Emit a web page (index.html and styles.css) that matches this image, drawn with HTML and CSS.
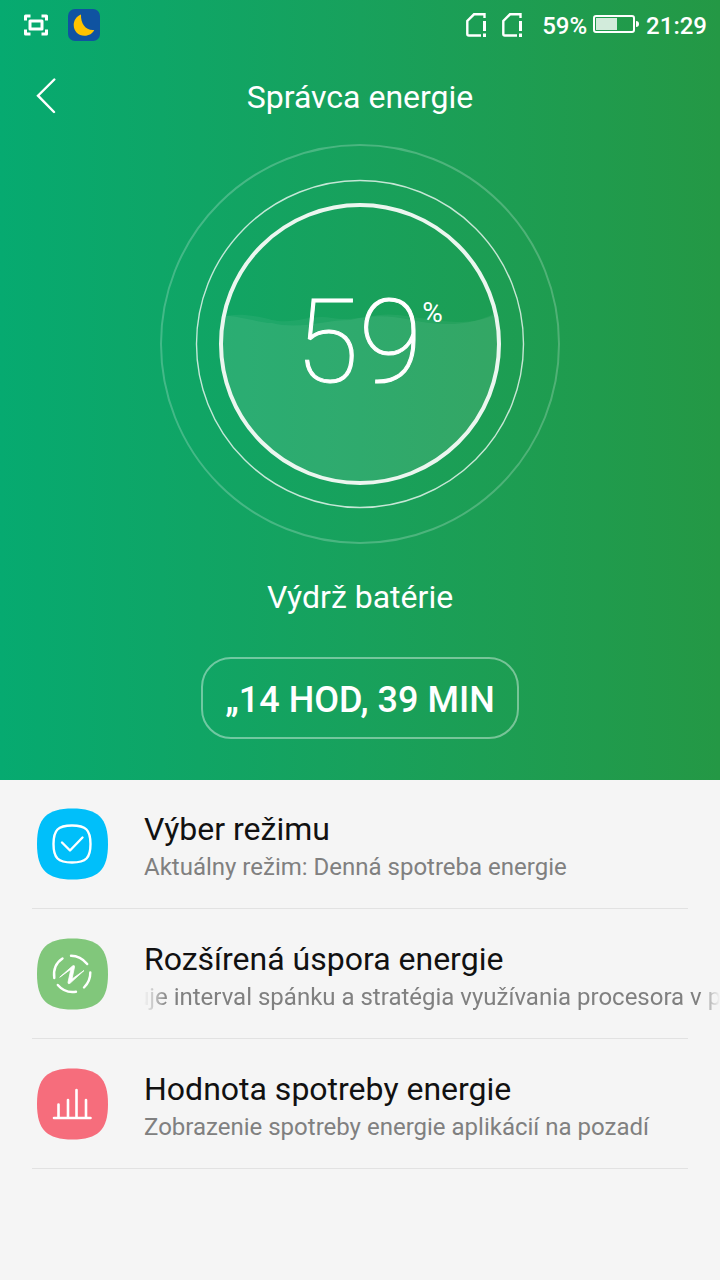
FILE: index.html
```html
<!DOCTYPE html>
<html lang="sk">
<head>
<meta charset="utf-8">
<meta name="viewport" content="width=device-width, initial-scale=1">
<title>Správca energie</title>
<link rel="stylesheet" href="styles.css">
</head>
<body>
<section class="hero">
  <div class="status">
    <div class="status-group status-left">
      <svg width="26" height="22" viewBox="0 0 26 22" fill="none" stroke="#fff" stroke-width="3" stroke-linejoin="round" aria-hidden="true">
        <path d="M2.500 6.500V2H7.500M18.500 2h5v4.500M2.500 15.500V20H7.500M18.500 20h5v-4.500"/>
        <rect x="7" y="7" width="12" height="8"/>
      </svg>
      <svg width="32" height="32" viewBox="0 0 32 32" aria-hidden="true">
        <rect width="32" height="32" rx="7" fill="#0f53a1"/>
        <path d="M13 5.500C8.500 7 5.700 11.500 5.700 16c0 6 4.500 10.800 10.800 10.800 4.500 0 8.300-2.500 9.700-5.800C18 22 12.500 14.500 13 5.500z" fill="#ffc400"/>
      </svg>
    </div>
    <div class="status-group status-right">
      <svg class="sim" width="20" height="24" viewBox="0 0 20 24" fill="none" stroke="#fff" aria-hidden="true">
        <path d="M18.500 5V1.300H8L1.300 8v13q0 1.500 1.500 1.500H15" stroke-width="2.400"/>
        <path d="M18.500 8v10M18.500 20.500V24" stroke-width="3"/>
      </svg>
      <svg class="sim" width="20" height="24" viewBox="0 0 20 24" fill="none" stroke="#fff" aria-hidden="true">
        <path d="M18.500 5V1.300H8L1.300 8v13q0 1.500 1.500 1.500H15" stroke-width="2.400"/>
        <path d="M18.500 8v10M18.500 20.500V24" stroke-width="3"/>
      </svg>
      <span class="level">59%</span>
      <svg class="battery" width="46" height="18" viewBox="0 0 46 18" aria-hidden="true">
        <rect x="1" y="1" width="40" height="16" rx="2" fill="none" stroke="#fff" stroke-width="2"/>
        <rect x="3" y="3" width="21" height="12" fill="#fff" fill-opacity=".8"/>
        <path d="M43 6q3 0 3 3t-3 3z" fill="#fff"/>
      </svg>
      <span>21:29</span>
    </div>
  </div>

  <header class="bar">
    <button class="back" type="button" aria-label="Späť">
      <svg width="20" height="36" viewBox="0 0 20 36" fill="none" stroke="#fff" stroke-width="2.400" stroke-linecap="round" aria-hidden="true"><path d="M18.300 1.500 2 17.700 18 34"/></svg>
    </button>
    <h1 class="title">Správca energie</h1>
  </header>

  <div class="gauge">
    <svg class="gauge-art" viewBox="0 0 400 400" fill="none" aria-hidden="true">
      <clipPath id="tank"><circle cx="200" cy="200" r="139"/></clipPath>
      <g clip-path="url(#tank)" fill="#fff">
        <path fill-opacity=".05" d="M60 174C72 168 95 171 112 176C135 181 150 170 172 174C200 178 212 168 238 171C275 175 310 186 340 168V345H60z"/>
        <path fill-opacity=".06" d="M60 171C85 173 100 179 112 179C140 186 165 176 190 176C215 170 230 172 252 176C285 184 320 180 340 166V345H60z"/>
      </g>
      <circle cx="200" cy="200" r="199" stroke="#fff" stroke-opacity=".22" stroke-width="2"/>
      <circle cx="200" cy="200" r="163.500" stroke="#fff" stroke-opacity=".75" stroke-width="1.400"/>
      <circle cx="200" cy="200" r="139" stroke="#ebf6ef" stroke-width="4"/>
    </svg>
    <div class="reading"><span class="number">59</span><span class="percent">%</span></div>
  </div>

  <p class="caption">Výdrž batérie</p>
  <p class="remaining">„14 HOD, 39 MIN</p>
</section>

<nav class="list">
  <a class="row" href="#mode">
    <svg class="icon" viewBox="0 0 72 72" fill="none" stroke="#fff" stroke-width="2.400" stroke-linecap="round" stroke-linejoin="round" aria-hidden="true">
      <path class="blue" d="M36.500.500C62 .500 72 10 72 36S62 71.500 36.500 71.500 1 62 1 36 11 .500 36.500.500z"/>
      <path d="M36 17.500C50 17.500 54.500 22 54.500 36S50 54.500 36 54.500 17.500 50 17.500 36 22 17.500 36 17.500zM26 34.500l8 8L46.500 29.500"/>
    </svg>
    <span class="text">
      <span class="name">Výber režimu</span>
      <span class="note">Aktuálny režim: Denná spotreba energie</span>
    </span>
  </a>
  <a class="row" href="#saving">
    <svg class="icon" viewBox="0 0 72 72" fill="none" stroke="#fff" stroke-width="2.400" stroke-linecap="round" stroke-linejoin="round" aria-hidden="true">
      <path class="green" d="M36.500.500C62 .500 72 10 72 36S62 71.500 36.500 71.500 1 62 1 36 11 .500 36.500.500z"/>
      <path d="M35 17.700Q44.500 17.700 51.200 26M54.300 34.500Q54.500 43 48 49.500M40 53.700Q29 55.500 21.800 47M18.300 40Q16.500 27 26.500 20.500"/>
      <path fill="#fff" stroke-width=".8" d="M24 39 36.500 28Q38.800 26.800 38.500 29L36 41 48 32.500 34 45.300Q31.800 46.500 32 44.300L34.800 31.500z"/>
    </svg>
    <span class="text">
      <span class="name">Rozšírená úspora energie</span>
      <span class="note ticker">uje interval spánku a stratégia využívania procesora v p</span>
    </span>
  </a>
  <a class="row" href="#usage">
    <svg class="icon" viewBox="0 0 72 72" fill="none" stroke="#fff" stroke-width="2.600" stroke-linecap="round" aria-hidden="true">
      <path class="red" d="M36.500.500C62 .500 72 10 72 36S62 71.500 36.500 71.500 1 62 1 36 11 .500 36.500.500z"/>
      <path d="M18 50h36.500M22.500 49V36.500M32 49V32M40.500 49V22M50 49V32"/>
    </svg>
    <span class="text">
      <span class="name">Hodnota spotreby energie</span>
      <span class="note">Zobrazenie spotreby energie aplikácií na pozadí</span>
    </span>
  </a>
</nav>
</body>
</html>
```
FILE: styles.css
```css
* { box-sizing: border-box; }

body {
  margin: 0;
  min-height: 100vh;
  background: #f5f5f5;
  font-family: Roboto, "Noto Sans", sans-serif;
  color: #fff;
}

h1, p { margin: 0; font-weight: 400; }

.hero {
  display: flex;
  flex-direction: column;
  align-items: center;
  padding-bottom: 41px;
  background: linear-gradient(90deg, #06aa70 0%, #18a15c 50%, #249845 100%);
}

.status {
  align-self: stretch;
  display: flex;
  justify-content: space-between;
  align-items: center;
  height: 50px;
  padding: 0 13px 0 23px;
  font-size: 24px;
  font-weight: 500;
  line-height: 28px;
}

.status-group { display: flex; align-items: center; }
.status-left { gap: 19px; }
.status-right { padding-top: 2px; }
.sim { margin: 0 16px 2px 0; }
.level { margin-left: 4px; }
.battery { margin: 0 7px 4px 6px; }

.bar {
  align-self: stretch;
  display: grid;
  grid-template-columns: 92px 1fr 92px;
  align-items: center;
  height: 94px;
}

.back {
  display: flex;
  padding: 6px 36px 8px;
  border: 0;
  background: none;
}

.title {
  text-align: center;
  font-size: 32px;
  line-height: 40px;
}

.gauge {
  display: grid;
  place-items: center;
  width: 400px;
  max-width: 100%;
}

.gauge-art, .reading { grid-area: 1 / 1; }
.gauge-art { display: block; width: 100%; }

.reading {
  display: flex;
  align-items: flex-start;
  padding: 0 0 4px 18px;
}

.number {
  font-size: 116px;
  font-weight: 100;
  line-height: 136px;
  -webkit-text-stroke: 1px #fff;
}

.percent {
  padding-top: 23px;
  font-size: 28px;
  line-height: 32px;
}

.caption {
  margin-top: 33px;
  font-size: 32px;
  line-height: 40px;
}

.remaining {
  margin-top: 40px;
  padding: 21px 22px 17px;
  border: 2px solid rgba(255, 255, 255, .4);
  border-radius: 30px;
  font-size: 36px;
  font-weight: 500;
  line-height: 40px;
}

.list { padding-left: 32px; }

.row {
  display: flex;
  align-items: center;
  gap: 36px;
  height: 130px;
  padding: 0 0 2px 4px;
  background: linear-gradient(#e2e2e2, #e2e2e2) left 0 top 128px / calc(100% - 32px) 1px no-repeat;
  color: #111;
  text-decoration: none;
}

.icon { flex: none; width: 72px; height: 72px; }
.blue { fill: #00bffa; stroke: none; }
.green { fill: #81c77b; stroke: none; }
.red { fill: #f66d7c; stroke: none; }

.text {
  display: flex;
  flex-direction: column;
  flex: 1;
  min-width: 0;
  padding-top: 6px;
}

.name { font-size: 32px; line-height: 40px; }

.note {
  font-size: 24px;
  line-height: 36px;
  color: #808080;
  white-space: nowrap;
  overflow: hidden;
}

.ticker {
  text-indent: -8px;
  -webkit-mask-image: linear-gradient(90deg, transparent, #000 24px, #000 calc(100% - 20px), transparent);
  mask-image: linear-gradient(90deg, transparent, #000 24px, #000 calc(100% - 20px), transparent);
}
```
